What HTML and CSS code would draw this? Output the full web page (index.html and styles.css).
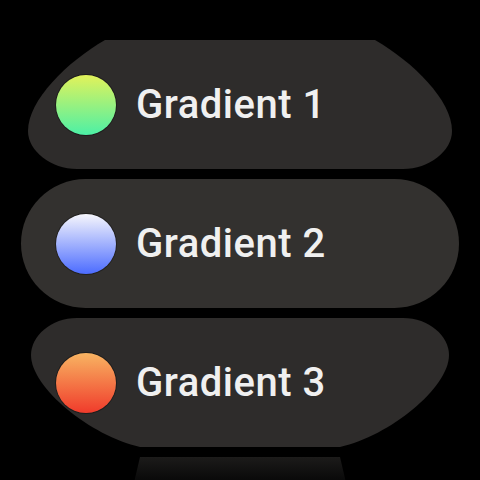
FILE: index.html
```html
<!DOCTYPE html>
<html lang="en">
<head>
<meta charset="utf-8">
<title>Gradients</title>
<link rel="stylesheet" href="styles.css">
</head>
<body>
<div class="screen">
  <ul class="list">
    <li class="chip chip-top">
      <span class="dot dot-green"></span>
      <span class="label">Gradient 1</span>
    </li>
    <li class="chip chip-mid">
      <span class="dot dot-blue"></span>
      <span class="label">Gradient 2</span>
    </li>
    <li class="chip chip-bottom">
      <span class="dot dot-red"></span>
      <span class="label">Gradient 3</span>
    </li>
    <li class="chip chip-next" aria-hidden="true"></li>
  </ul>
</div>
</body>
</html>
```

FILE: styles.css
```css
html, body {
  margin: 0;
  padding: 0;
  background: #000;
}

.screen {
  width: 480px;
  height: 480px;
  overflow: hidden;
  background: #000;
  font-family: Roboto, "Noto Sans", sans-serif;
}

.list {
  list-style: none;
  margin: 0;
  padding: 40px 21px 0;
  display: flex;
  flex-direction: column;
  gap: 10px;
}

.chip {
  box-sizing: border-box;
  height: 129px;
  flex: none;
  display: flex;
  align-items: center;
  gap: 20px;
  padding-left: 35px;
  background: #302e2d;
}

.chip-top {
  background: #2e2c2b;
  clip-path: path("M 84 0 L 354 0 C 392 22 431 60 431 91 C 431 111 408 129 382 129 L 56 129 C 30 129 7 111 7 91 C 7 60 46 22 84 0 Z");
}

.chip-mid {
  background: #33312f;
  border-radius: 64.5px;
}

.chip-bottom {
  background: #2e2c2b;
  clip-path: path("M 56 0 L 382 0 C 408 0 428 18 428 37 C 428 70 368 118 319 129 L 119 129 C 70 118 10 70 10 37 C 10 18 30 0 56 0 Z");
}

.chip-next {
  height: 40px;
  background: linear-gradient(#1c1b1a, #0a0a0a 55%, #000);
  clip-path: polygon(119px 0, 319px 0, 326px 30px, 112px 30px);
}

.dot {
  flex: none;
  width: 60px;
  height: 60px;
  border-radius: 50%;
  box-shadow: 0 0 0 1px rgba(0, 0, 0, 0.35);
}

.dot-green {
  background: linear-gradient(#e2f25a, #4cf0a6);
}

.dot-blue {
  background: linear-gradient(#f6f6fc, #4c6cff);
}

.dot-red {
  background: linear-gradient(#f8b462, #f03b2b);
}

.label {
  color: #f0f0f0;
  font-size: 40px;
  font-weight: 500;
  letter-spacing: 0.5px;
  line-height: 1;
}
```
